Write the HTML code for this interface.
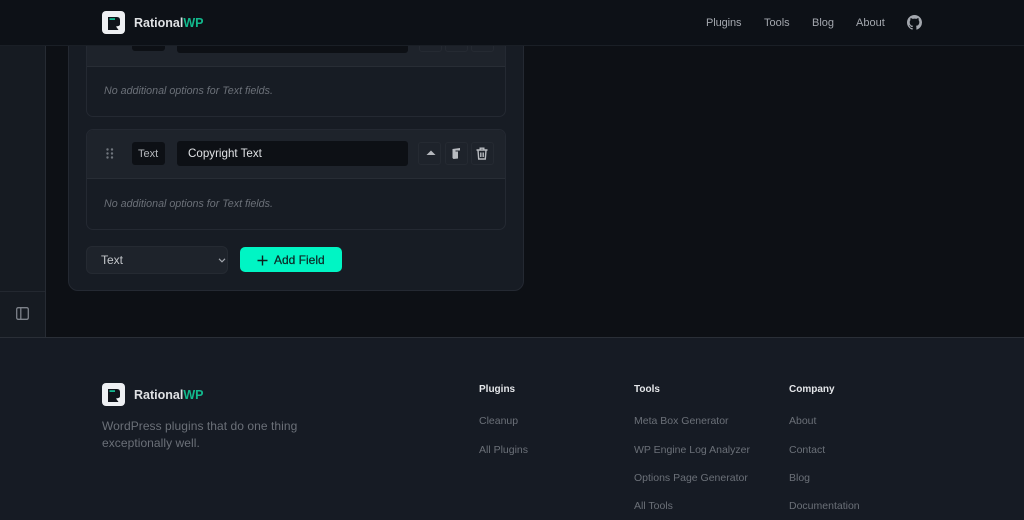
<!DOCTYPE html>
<html><head><meta charset="utf-8"><style>
*{box-sizing:border-box}
html,body{margin:0;padding:0}
body{width:1024px;height:520px;overflow:hidden;background:#0d1015;position:relative;font-family:"Liberation Sans",sans-serif}
.a{position:absolute}
.t{position:absolute;white-space:nowrap;line-height:1}
.fl{color:#6b7078;font-size:10.5px}
.fh{color:#e4e6e9;font-size:10px;font-weight:bold}
.nav{color:#a3a7ae;font-size:11px}
.it{color:#6b7078;font-size:10.7px;font-style:italic}
.ib{position:absolute;width:23px;height:23px;border:1px solid #252a32;border-radius:3px;background:#1e232b}
.logo{font-size:12.5px;font-weight:bold;color:#dfe1e4}
</style></head><body>
<div class="a" style="left:0;top:0;width:45px;height:337px;background:#161b22"></div>
<div class="a" style="left:45px;top:0;width:1px;height:337px;background:#262b33"></div>
<div class="a" style="left:0;top:291px;width:45px;height:1px;background:#232830"></div>
<svg class="a" style="left:16px;top:307px" width="13" height="13" viewBox="0 0 13 13" fill="none" stroke="#7d828a" stroke-width="1.3"><rect x=".7" y=".7" width="11.6" height="11.6" rx="1.5"/><path d="M4.8 1v11"/></svg>

<div class="a" style="left:68px;top:-20px;width:456px;height:311px;background:#171c24;border:1px solid #242932;border-radius:10px"></div>

<div class="a" style="left:86px;top:-20px;width:420px;height:137px;background:#171c24;border:1px solid #242932;border-radius:7px;overflow:hidden">
<div class="a" style="left:0;top:0;width:418px;height:86px;background:#1e232b;border-bottom:1px solid #282d35"></div>
<div class="a" style="left:45px;top:56px;width:33px;height:14px;background:#0d1015;border-radius:3px"></div>
<div class="a" style="left:90px;top:56px;width:231px;height:16px;background:#0d1015;border-radius:3px"></div>
<div class="ib" style="left:332px;top:48px"></div><div class="ib" style="left:358px;top:48px"></div><div class="ib" style="left:384px;top:48px"></div>
</div>
<div class="t it" style="left:104px;top:86px">No additional options for Text fields.</div>

<div class="a" style="left:86px;top:129px;width:420px;height:101px;background:#171c24;border:1px solid #242932;border-radius:7px;overflow:hidden">
<div class="a" style="left:0;top:0;width:418px;height:49px;background:#1e232b;border-bottom:1px solid #282d35"></div>
<div class="a" style="left:45px;top:12px;width:33px;height:23px;background:#0d1015;border-radius:3px"></div>
<div class="a" style="left:90px;top:11px;width:231px;height:25px;background:#0d1015;border-radius:3px"></div>
<div class="ib" style="left:331px;top:12px"></div><div class="ib" style="left:358px;top:12px"></div><div class="ib" style="left:384px;top:12px"></div>
</div>
<svg class="a" style="left:106px;top:148px" width="8" height="11" fill="#70757d"><circle cx="1.5" cy="1.5" r="1.2"/><circle cx="6" cy="1.5" r="1.2"/><circle cx="1.5" cy="5.5" r="1.2"/><circle cx="6" cy="5.5" r="1.2"/><circle cx="1.5" cy="9.5" r="1.2"/><circle cx="6" cy="9.5" r="1.2"/></svg>
<div class="t" style="left:138px;top:149px;color:#b4b7bc;font-size:11px">Text</div>
<div class="t" style="left:188px;top:148px;color:#e0e2e5;font-size:11.6px">Copyright Text</div>
<svg class="a" style="left:426px;top:150px" width="10" height="6"><path d="M.5 5L5 .5 9.5 5z" fill="#b4b7bc"/></svg>
<svg class="a" style="left:452px;top:148px" width="9" height="11"><path d="M.5 1L8 0v2.5H3.5V3.5H6v7L1.5 11 .5 10z" fill="#b8bbc0"/></svg>
<svg class="a" style="left:476px;top:147px" width="12" height="13" fill="none" stroke="#b8bbc0" stroke-width="1.4"><path d="M.5 3h11M4.2 3V1.2h3.6V3M2 3l.7 9h6.6l.7-9M4.8 5.5v4.5M7.2 5.5v4.5"/></svg>
<div class="t it" style="left:104px;top:199px">No additional options for Text fields.</div>

<div class="a" style="left:86px;top:246px;width:142px;height:28px;background:#1e232b;border:1px solid #252a32;border-radius:6px"></div>
<div class="t" style="left:101px;top:254px;color:#c3c6ca;font-size:12px">Text</div>
<svg class="a" style="left:218px;top:258px" width="8" height="5" fill="none" stroke="#a3a7ae" stroke-width="1.1"><path d="M1 .8l3 3 3-3"/></svg>
<div class="a" style="left:240px;top:247px;width:102px;height:25px;background:#00f5c4;border-radius:5px"></div>
<svg class="a" style="left:257px;top:255px" width="11" height="11" fill="none" stroke="#0d1f1d" stroke-width="1.4"><path d="M5.5 .5v10M.5 5.5h10"/></svg>
<div class="t" style="left:274px;top:254px;color:#0c2a28;font-size:12px;-webkit-text-stroke:.25px #0c2a28">Add Field</div>

<div class="a" style="left:0;top:0;width:1024px;height:45px;background:#0d1117"></div>
<div class="a" style="left:0;top:45px;width:1024px;height:1px;background:#1a1f26"></div>
<div class="a" style="left:102px;top:11px;width:23px;height:23px;background:#eef0f3;border-radius:4px"></div>
<svg class="a" style="left:108px;top:17px" width="12" height="13"><path d="M0 0H9Q12 0 12 3V7.5Q12 8.5 10.5 9L8 9.5 10.5 13H0z" fill="#10141b"/><rect x="1.5" y="1.2" width="5.5" height="1.8" fill="#14b88f"/></svg>
<div class="t logo" style="left:134px;top:17px">Rational<span style="color:#12b98d">WP</span></div>
<div class="t nav" style="left:706px;top:18px;letter-spacing:-.1px">Plugins</div>
<div class="t nav" style="left:764px;top:18px">Tools</div>
<div class="t nav" style="left:812px;top:18px">Blog</div>
<div class="t nav" style="left:856px;top:18px">About</div>
<svg class="a" style="left:907px;top:15px" width="15" height="15" viewBox="0 0 16 16" fill="#a3a7ae"><path d="M8 0C3.58 0 0 3.58 0 8c0 3.54 2.29 6.53 5.47 7.59.4.07.55-.17.55-.38 0-.19-.01-.82-.01-1.49-2.01.37-2.53-.49-2.69-.94-.09-.23-.48-.94-.82-1.13-.28-.15-.68-.52-.01-.53.63-.01 1.08.58 1.23.82.72 1.21 1.87.87 2.33.66.07-.52.28-.87.51-1.07-1.78-.2-3.64-.89-3.64-3.95 0-.87.31-1.59.82-2.15-.08-.2-.36-1.02.08-2.12 0 0 .67-.21 2.2.82.64-.18 1.32-.27 2-.27s1.36.09 2 .27c1.53-1.04 2.2-.82 2.2-.82.44 1.1.16 1.92.08 2.12.51.56.82 1.27.82 2.15 0 3.07-1.87 3.75-3.65 3.95.29.25.54.73.54 1.48 0 1.07-.01 1.93-.01 2.2 0 .21.15.46.55.38A8.01 8.01 0 0016 8c0-4.42-3.58-8-8-8z"/></svg>

<div class="a" style="left:0;top:337px;width:1024px;height:183px;background:#161b24;border-top:1px solid #2a2f37"></div>
<div class="a" style="left:102px;top:383px;width:23px;height:23px;background:#eef0f3;border-radius:4px"></div>
<svg class="a" style="left:108px;top:389px" width="12" height="13"><path d="M0 0H9Q12 0 12 3V7.5Q12 8.5 10.5 9L8 9.5 10.5 13H0z" fill="#10141b"/><rect x="1.5" y="1.2" width="5.5" height="1.8" fill="#14b88f"/></svg>
<div class="t logo" style="left:134px;top:389px">Rational<span style="color:#12b98d">WP</span></div>
<div class="t" style="left:102px;top:420px;color:#6b7078;font-size:12px;letter-spacing:.06px">WordPress plugins that do one thing</div>
<div class="t" style="left:102px;top:437px;color:#6b7078;font-size:12px;letter-spacing:.06px">exceptionally well.</div>

<div class="t fh" style="left:479px;top:385px">Plugins</div>
<div class="t fl" style="left:479px;top:416px">Cleanup</div>
<div class="t fl" style="left:479px;top:445px">All Plugins</div>
<div class="t fh" style="left:634px;top:385px">Tools</div>
<div class="t fl" style="left:634px;top:416px">Meta Box Generator</div>
<div class="t fl" style="left:634px;top:445px">WP Engine Log Analyzer</div>
<div class="t fl" style="left:634px;top:473px">Options Page Generator</div>
<div class="t fl" style="left:634px;top:501px">All Tools</div>
<div class="t fh" style="left:789px;top:385px">Company</div>
<div class="t fl" style="left:789px;top:416px">About</div>
<div class="t fl" style="left:789px;top:445px">Contact</div>
<div class="t fl" style="left:789px;top:473px">Blog</div>
<div class="t fl" style="left:789px;top:501px">Documentation</div>
</body></html>
